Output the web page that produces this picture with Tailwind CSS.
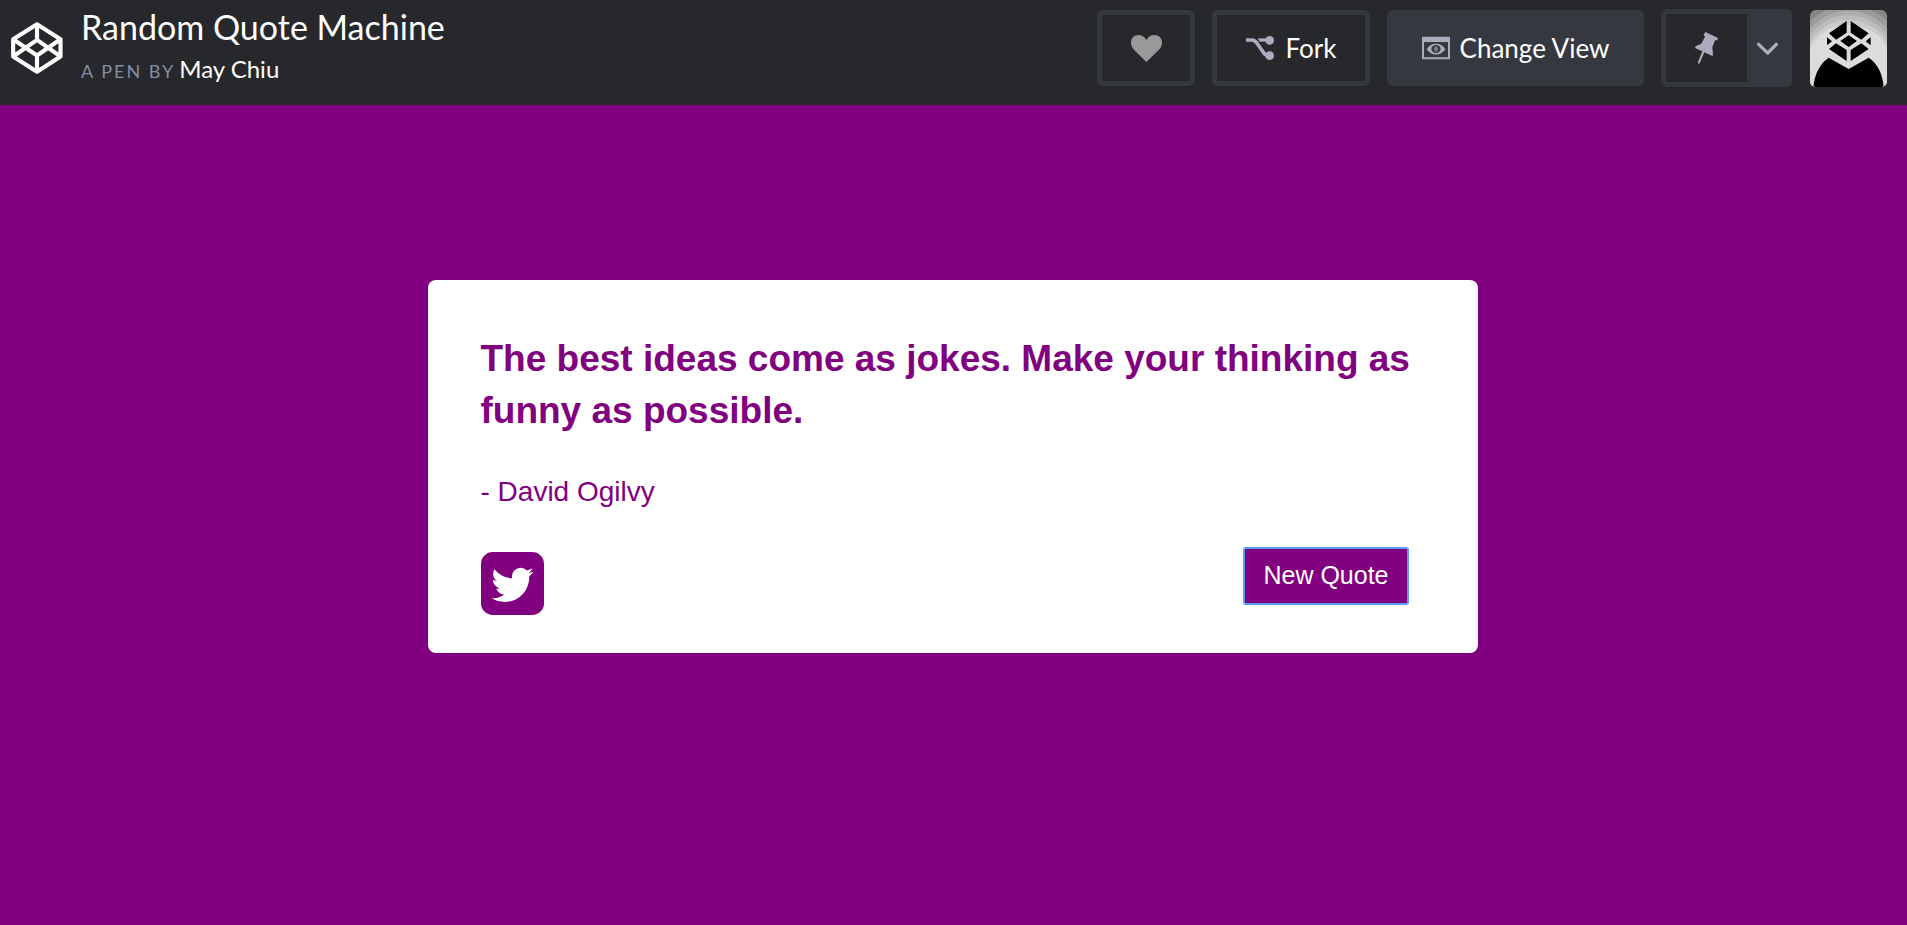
<!DOCTYPE html>
<html lang="en">
<head>
<meta charset="utf-8">
<title>Random Quote Machine</title>
<script src="https://cdn.jsdelivr.net/npm/@tailwindcss/browser@4"></script>
</head>
<body class="min-h-screen flex flex-col bg-[#800080] font-['Liberation_Sans',Arial,sans-serif]">
<header class="flex items-start justify-between h-[105px] pl-[11px] pr-5 bg-[#27282c] text-white font-[Lato,sans-serif]">
  <div class="flex items-start">
    <a href="#" aria-label="CodePen" class="mt-[22px]">
      <svg class="block w-[52px] h-[52px]" viewBox="33 36 156 157" fill="none" stroke="#fff" stroke-width="12.5" stroke-linejoin="round">
        <path d="M111 43L182 88V140L111 186L39 140V88ZM111 43V90M111 137V186M39 88L111 137L182 88M39 140L111 90L182 140"/>
      </svg>
    </a>
    <div class="ml-[18px] mt-[7px]">
      <h1 class="text-[34px] leading-10">Random Quote Machine</h1>
      <p class="flex items-baseline gap-1 text-[18px] leading-[44px] tracking-[2px] text-[#868ca0]">A PEN BY <a href="#" class="text-[24px] tracking-normal text-white">May Chiu</a></p>
    </div>
  </div>
  <div class="flex items-center gap-[17px] mt-[9px] h-[78px] text-[26px]">
    <button aria-label="Love" class="flex items-center justify-center w-[98px] h-[76px] border-5 border-[#363840] rounded-[6px]">
      <svg class="w-[31px] h-[27px]" viewBox="0 0 93 81" fill="#999"><path d="M46 81L9 44C-3 32-2 15 6 7C17-4 37-2 46 15C55-2 76-4 87 7C95 15 96 32 84 44Z"/></svg>
    </button>
    <button class="flex items-center justify-center gap-3 w-[158px] h-[76px] border-5 border-[#363840] rounded-[6px]">
      <svg class="w-7 h-6" viewBox="0 0 84 72" fill="none" stroke="#acacbe" stroke-width="11"><path d="M0 12H18C26 12 29 16 33 22L53 50C57 56 61 59 70 59"/><path d="M37 12H70" stroke-width="10"/><path d="M30 6L40 17" stroke="#27282c" stroke-width="3"/><g fill="#acacbe" stroke="none"><circle cx="71" cy="13" r="13"/><circle cx="71" cy="59" r="13"/></g></svg>
      Fork
    </button>
    <button class="flex items-center justify-center gap-[10px] w-[257px] h-[76px] bg-[#363840] rounded-[6px]">
      <svg class="w-7 h-6" viewBox="0 0 84 72"><path fill="#acacbe" fill-rule="evenodd" d="M2 2H82Q84 2 84 4V68Q84 70 82 70H2Q0 70 0 68V4Q0 2 2 2ZM6 18V64H78V18Z"/><path fill="#acacbe" d="M14 40C28 18 56 18 70 40C56 61 28 61 14 40Z"/><ellipse cx="42" cy="39" rx="14" ry="12" fill="#363840"/><ellipse cx="42" cy="39" rx="6" ry="8" fill="#7c7d8b"/></svg>
      Change View
    </button>
    <div class="flex w-[131px] h-[78px] mr-px border-5 border-[#363840] rounded-[6px] bg-[#363840]">
      <button aria-label="Pin" class="flex items-center justify-center w-[81px] bg-[#27282c]">
        <svg class="w-[23px] h-8" viewBox="0 0 69 96" fill="#acacbe"><path d="M31 0L69 18L67 25L60 25L52 46L54 68L52 72L28 61L14 94L9 95L9 90L22 58L0 48L2 43L19 35L30 14L26 8Z"/></svg>
      </button>
      <button aria-label="Pin options" class="flex flex-1 items-center justify-center">
        <svg class="w-[21px] h-[13px]" viewBox="0 0 63 39" fill="none" stroke="#acacbe" stroke-width="10" stroke-linecap="round" stroke-linejoin="round"><path d="M5 7L32 33L58 7"/></svg>
      </button>
    </div>
    <button aria-label="Profile" class="overflow-hidden rounded-[6px] w-[77px] h-[77px]">
      <svg class="block w-full h-full" viewBox="0 0 231 231">
        <path fill="#878787" d="M0 0H231V231H0Z"/>
        <circle cx="116" cy="150" r="164" fill="#9b9b9b"/>
        <circle cx="116" cy="154" r="151" fill="#adadad"/>
        <circle cx="116" cy="158" r="142" fill="#bcbcbc"/>
        <circle cx="116" cy="164" r="134" fill="#cbcbcb"/>
        <circle cx="116" cy="176" r="132" fill="#dcdcdc"/>
        <path d="M10 231C14 190 32 158 56 143L116 177L176 143C202 160 218 190 221 231Z"/>
        <path d="M110 33V68L78 89L57 70ZM122 33V68L154 89L176 70ZM116 76L141 93L116 111L91 93ZM51 82L66 94L51 106ZM182 82L167 94L182 106ZM78 100L110 120V153L57 117ZM154 100L122 120V153L176 117Z"/>
      </svg>
    </button>
  </div>
</header>
<main class="flex flex-1 items-start justify-center pt-[175px] pr-0.5">
  <section class="w-full max-w-[1050px] pt-[53px] px-[53px] pb-[38px] rounded-lg bg-white text-[#800080]">
    <blockquote class="text-[37px] leading-[52px] font-bold">The best ideas come as jokes. Make your thinking as funny as possible.</blockquote>
    <p class="mt-[35px] text-[28px] leading-10">- David Ogilvy</p>
    <div class="flex items-start justify-between mt-[35px] pr-4">
      <a href="#" aria-label="Tweet quote" class="mt-[5px]">
        <svg class="block w-[63px] h-[63px]" viewBox="128 128 1536 1536" fill="currentColor"><path d="M1408 610q-56 24-121 34 68-40 93-117-65 38-134 51-61-66-153-66-87 0-148.500 61.500t-61.500 148.500q0 29 5 48-129-7-242-65t-192-155q-29 50-29 106 0 114 91 175-47-1-100-26v2q0 75 50 133.500t123 72.500q-29 8-51 8-13 0-39-4 21 63 74.500 104t121.500 42q-116 90-261 90-26 0-50-3 148 94 322 94 112 0 210-35.500t168-95 120.500-137 75-162 24.500-168.500q0-18-1-27 63-45 105-109zm256-194v960q0 119-84.500 203.500t-203.500 84.500h-960q-119 0-203.500-84.500t-84.500-203.500v-960q0-119 84.500-203.500t203.500-84.500h960q119 0 203.500 84.500t84.500 203.500z"/></svg>
      </a>
      <button class="h-[58px] px-[18px] text-[25px] bg-[#800080] text-white border-2 border-[#5b9cf5] rounded-[3px]">New Quote</button>
    </div>
  </section>
</main>
</body>
</html>
